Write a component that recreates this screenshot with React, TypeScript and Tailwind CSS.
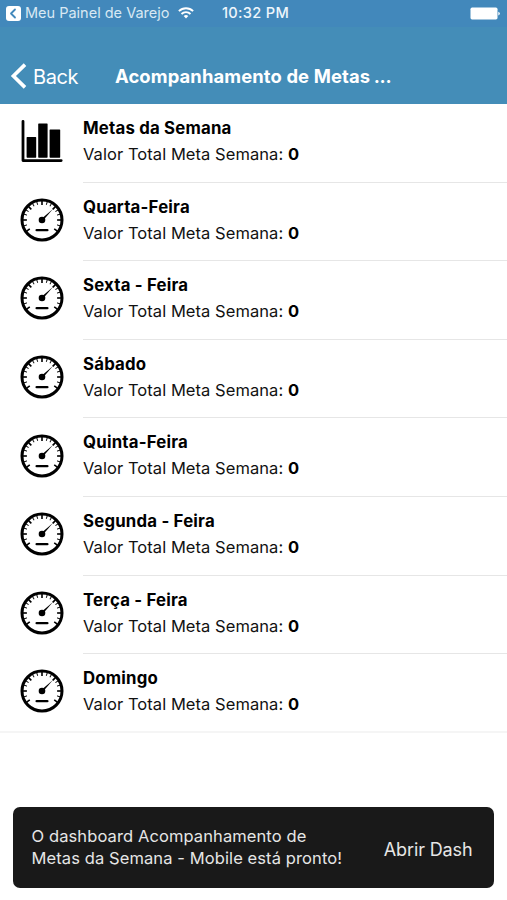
import { useState } from "react";

interface Goal {
  title: string;
  total: number;
  icon: "chart" | "gauge";
}

const goals: Goal[] = [
  { title: "Metas da Semana", total: 0, icon: "chart" },
  { title: "Quarta-Feira", total: 0, icon: "gauge" },
  { title: "Sexta - Feira", total: 0, icon: "gauge" },
  { title: "Sábado", total: 0, icon: "gauge" },
  { title: "Quinta-Feira", total: 0, icon: "gauge" },
  { title: "Segunda - Feira", total: 0, icon: "gauge" },
  { title: "Terça - Feira", total: 0, icon: "gauge" },
  { title: "Domingo", total: 0, icon: "gauge" },
];

const longTicks = [-126, -90, -45, 0, 45, 90, 126];
const shortTicks = [-108, -72, -58, -30, -16, 16, 30, 58, 72, 108];

const ChartIcon = () => (
  <svg className="w-11 h-11" viewBox="0 0 44 44" fill="black">
    <path d="M3 2.3v39.3h38.2" fill="none" stroke="black" strokeWidth="2.8" strokeLinecap="round" strokeLinejoin="round" />
    <rect x="6.6" y="18.1" width="9.6" height="20.6" rx="0.6" />
    <rect x="18.2" y="4.5" width="9.4" height="34.2" rx="0.6" />
    <rect x="29.6" y="10.5" width="10.6" height="28.2" rx="0.6" />
  </svg>
);

const GaugeIcon = () => (
  <svg className="w-11 h-11" viewBox="0 0 44 44" fill="black">
    <circle cx="22" cy="22" r="20" fill="none" stroke="black" strokeWidth="3" />
    {longTicks.map((angle) => (
      <path key={angle} d="M22 3v3.9" stroke="black" strokeWidth="1.6" transform={`rotate(${angle} 22 22)`} />
    ))}
    {shortTicks.map((angle) => (
      <path key={angle} d="M22 3v3.2" stroke="black" strokeWidth="0.9" transform={`rotate(${angle} 22 22)`} />
    ))}
    <circle cx="22" cy="22" r="3.3" />
    <path d="M22.4 20L33 11L23.9 21.6Z" />
    <path d="M16.6 32.2h10.8" stroke="black" strokeWidth="2.3" strokeLinecap="round" />
  </svg>
);

const StatusBar = () => (
  <div className="h-[27px] bg-[#4288bb] flex items-center text-[#eef6fb]">
    <svg className="ml-[6px] w-[15px] h-[15px]" viewBox="0 0 15 15">
      <rect width="15" height="15" rx="3" fill="white" />
      <path d="M9 3.5L5 7.5L9 11.5" fill="none" stroke="#4288bb" strokeWidth="1.8" strokeLinecap="round" strokeLinejoin="round" />
    </svg>
    <span className="ml-[4px] w-[153px] pb-px text-[14.5px] whitespace-nowrap text-[#d8e8f3]">Meu Painel de Varejo</span>
    <svg className="w-[16px] h-[12px] -mt-px" viewBox="0 0 16 12" fill="none" stroke="white" strokeWidth="1.9">
      <path d="M0.9 4.2a10 10 0 0 1 14.2 0" />
      <path d="M3.5 7a6.4 6.4 0 0 1 9 0" />
      <path d="M8 11.5L5.7 9.1a3.3 3.3 0 0 1 4.6 0Z" fill="white" stroke="none" />
    </svg>
    <span className="ml-[28px] pt-px text-[14.6px] tracking-[0.3px] font-medium whitespace-nowrap">10:32 PM</span>
    <svg className="ml-auto mr-[7px] w-[30px] h-[13px]" viewBox="0 0 30 13" fill="white">
      <rect x="0.5" y="0.6" width="27" height="11.8" rx="1.6" />
      <path d="M28.3 4.7q1.5 0.5 1.5 1.9t-1.5 1.9Z" />
    </svg>
  </div>
);

const App: React.FC = () => {
  const [showToast, setShowToast] = useState<boolean>(true);

  return (
    <div className="h-[900px] w-[507px] flex flex-col bg-white font-['Inter',sans-serif] text-[#111] overflow-hidden">
      <header className="h-[104px] shrink-0 bg-[#448db8] text-white">
        <StatusBar />
        <div className="h-[77px] flex items-center pt-[22px]">
          <button type="button" className="ml-[10px] w-[105px] flex items-center text-[20px] tracking-[-0.4px]">
            <svg className="w-[18px] h-[26px] -mt-px" viewBox="0 0 18 26" fill="none" stroke="white" strokeWidth="3.6">
              <path d="M15 1.6L3.4 13L15 24.4" />
            </svg>
            <span className="ml-[5px]">Back</span>
          </button>
          <h1 className="text-[18.4px] tracking-[0.12px] font-bold whitespace-nowrap">
            Acompanhamento de Metas <span className="-ml-px tracking-[-0.2px]">...</span>
          </h1>
        </div>
      </header>

      <ul className="shrink-0 border-b-2 border-[#f5f5f5]">
        {goals.map((goal, index) => (
          <li
            key={goal.title}
            className={index < goals.length - 1 ? "h-[78.6px] flex pl-5" : "h-[76.8px] flex pl-5"}
          >
            <div className="w-[63px] pt-[15.2px]">
              {goal.icon === "chart" ? <ChartIcon /> : <GaugeIcon />}
            </div>
            <div
              className={
                index < goals.length - 1
                  ? "flex-1 pt-[11.1px] border-b border-[#e6e6e6]"
                  : "flex-1 pt-[11.1px]"
              }
            >
              <h2 className="text-[16.8px] tracking-[0.2px] leading-[27px] font-bold text-black">{goal.title}</h2>
              <p className="-mt-px text-[16.5px] tracking-[0.06px] leading-[26px]">
                Valor Total Meta Semana: <b className="text-black">{goal.total}</b>
              </p>
            </div>
          </li>
        ))}
      </ul>

      {showToast && (
        <div className="mt-auto mb-[12px] mx-[13px] h-[81px] shrink-0 rounded-[7px] bg-[#191919] flex items-center justify-between pl-[18.5px] pr-[21.5px] text-[#e6e6e6]">
          <p className="pb-px text-[16.5px] tracking-[0.1px] leading-[22px] whitespace-nowrap">
            O dashboard Acompanhamento de
            <br />
            Metas da Semana - Mobile está pronto!
          </p>
          <button
            type="button"
            className="pt-[3px] text-[18px] tracking-[-0.12px] whitespace-nowrap"
            onClick={() => setShowToast(false)}
          >
            Abrir Dash
          </button>
        </div>
      )}
    </div>
  );
};

export default App;
